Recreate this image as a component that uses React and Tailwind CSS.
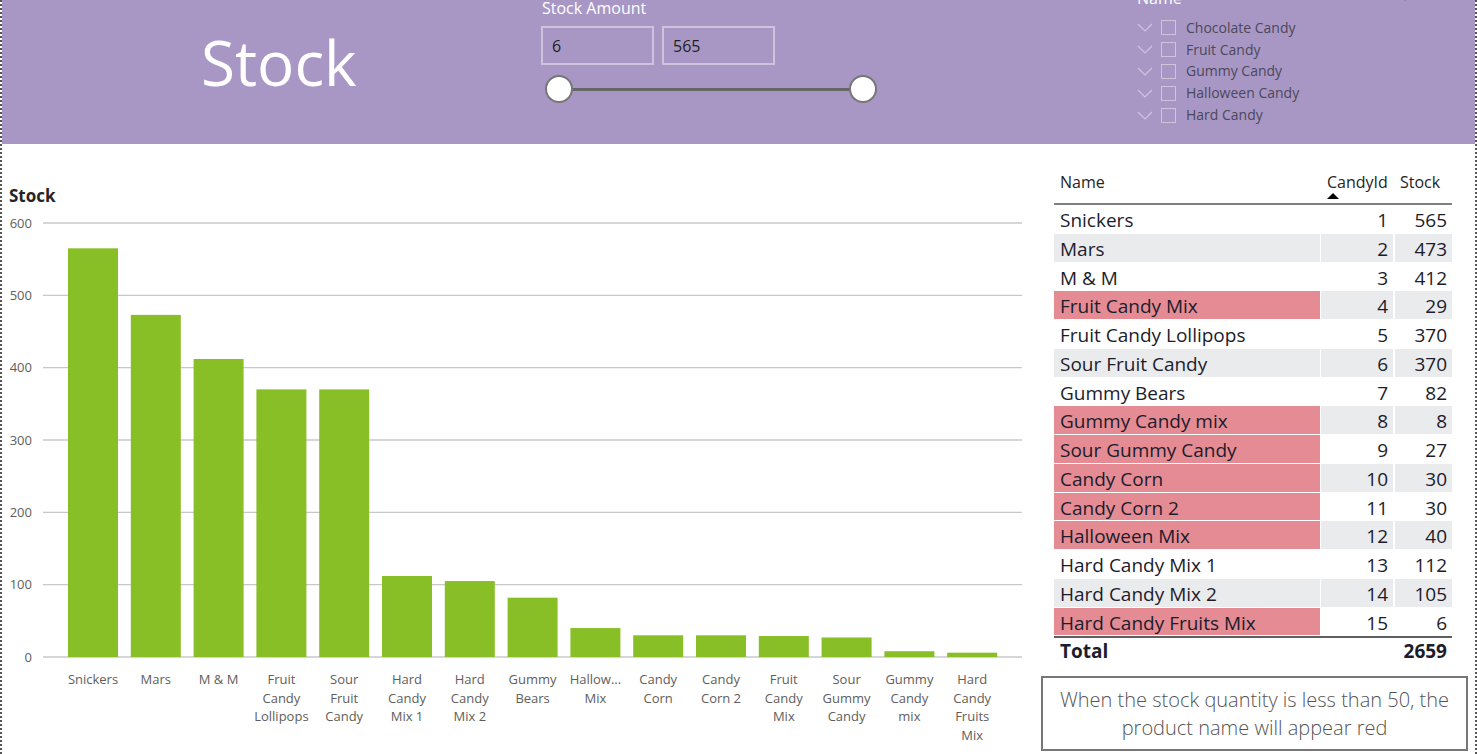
import React from 'react';

const candies = [
  { id: 1, name: 'Snickers', stock: 565, label: ['Snickers'] },
  { id: 2, name: 'Mars', stock: 473, label: ['Mars'] },
  { id: 3, name: 'M & M', stock: 412, label: ['M & M'] },
  { id: 4, name: 'Fruit Candy Mix', stock: 29, label: ['Fruit', 'Candy', 'Mix'] },
  { id: 5, name: 'Fruit Candy Lollipops', stock: 370, label: ['Fruit', 'Candy', 'Lollipops'] },
  { id: 6, name: 'Sour Fruit Candy', stock: 370, label: ['Sour', 'Fruit', 'Candy'] },
  { id: 7, name: 'Gummy Bears', stock: 82, label: ['Gummy', 'Bears'] },
  { id: 8, name: 'Gummy Candy mix', stock: 8, label: ['Gummy', 'Candy', 'mix'] },
  { id: 9, name: 'Sour Gummy Candy', stock: 27, label: ['Sour', 'Gummy', 'Candy'] },
  { id: 10, name: 'Candy Corn', stock: 30, label: ['Candy', 'Corn'] },
  { id: 11, name: 'Candy Corn 2', stock: 30, label: ['Candy', 'Corn 2'] },
  { id: 12, name: 'Halloween Mix', stock: 40, label: ['Hallow...', 'Mix'] },
  { id: 13, name: 'Hard Candy Mix 1', stock: 112, label: ['Hard', 'Candy', 'Mix 1'] },
  { id: 14, name: 'Hard Candy Mix 2', stock: 105, label: ['Hard', 'Candy', 'Mix 2'] },
  { id: 15, name: 'Hard Candy Fruits Mix', stock: 6, label: ['Hard', 'Candy', 'Fruits', 'Mix'] },
];

const categories = ['Chocolate Candy', 'Fruit Candy', 'Gummy Candy', 'Halloween Candy', 'Hard Candy'];

function Chevron({ className }) {
  return (
    <svg width="16" height="9" viewBox="0 0 16 9" className={className}>
      <path d="M1 1 L8 8 L15 1" fill="none" stroke="currentColor" strokeWidth="1.2" />
    </svg>
  );
}

function StockChart() {
  // svg sits at page x 2, y 207
  const sorted = [...candies].sort((a, b) => b.stock - a.stock);
  const zeroY = 657 - 207;
  const scale = 0.7233;
  const ticks = [0, 100, 200, 300, 400, 500, 600];
  return (
    <svg width="1037" height="547" className="block">
      {ticks.map((t) => {
        const y = zeroY - t * scale;
        return (
          <g key={t}>
            <line x1="41" x2="1020" y1={y} y2={y} stroke="#c8c8c8" strokeWidth="1.3" />
            <text x="30" y={y + 4.5} textAnchor="end" fontSize="13" fill="#605e5c">
              {t}
            </text>
          </g>
        );
      })}
      {sorted.map((c, i) => {
        const x = 66 + i * 62.8;
        const h = c.stock * scale;
        return (
          <g key={c.id}>
            <rect x={x} y={zeroY - h} width="50" height={h} fill="#88bf26" />
            {c.label.map((line, j) => (
              <text key={j} x={x + 25} y={zeroY + 27 + j * 18.5} textAnchor="middle" fontSize="13" fill="#605e5c">
                {line}
              </text>
            ))}
          </g>
        );
      })}
    </svg>
  );
}

function StockTable() {
  const total = candies.reduce((s, c) => s + c.stock, 0);
  return (
    <div className="ml-[13px] w-[398px] pt-[23px] text-[#1c1c2c]">
      <div className="relative flex h-[38px] border-b-2 border-[#7f7f7f] text-[16px] leading-[20px] text-[#252423]">
        <div className="w-[266px] pl-[6px] pt-[5px]">Name</div>
        <div className="ml-px w-[72px] pl-[6px] pt-[5px]">CandyId</div>
        <div className="ml-[2px] w-[57px] pl-[5px] pt-[5px]">Stock</div>
        <div className="absolute left-[273px] top-[26px] h-0 w-0 border-x-[6px] border-b-[6px] border-x-transparent border-b-black" />
      </div>
      {candies.map((c, i) => {
        const bg = i % 2 === 1 ? 'bg-[#eaebed]' : 'bg-white';
        const nameBg = c.stock < 50 ? 'bg-[#e58b93]' : bg;
        return (
          <div key={c.id} className="flex h-[28.75px] border-b border-white text-[19px] leading-[28px]">
            <div className={`w-[266px] pl-[6px] pt-px ${nameBg}`}>{c.name}</div>
            <div className={`ml-px w-[72px] pr-[5px] pt-px text-right ${bg}`}>{c.id}</div>
            <div className={`ml-[2px] w-[57px] pr-[5px] pt-px text-right ${bg}`}>{c.stock}</div>
          </div>
        );
      })}
      <div className="flex h-[28px] border-t-2 border-[#5f5f5f] text-[19px] font-bold leading-[26px]">
        <div className="w-[266px] pl-[6px]">Total</div>
        <div className="ml-px w-[72px]" />
        <div className="ml-[2px] w-[57px] pr-[5px] text-right">{total}</div>
      </div>
    </div>
  );
}

export default function App() {
  return (
    <div className="h-[754px] w-[1477px] overflow-hidden border-x-2 border-dotted border-[#555] bg-white font-['Open_Sans',sans-serif]">
      <div className="flex h-[144px] bg-[#a897c5]">
        <div className="w-[539px] shrink-0 pl-[199px] pt-[22px]">
          <div className="text-[62px] leading-[80px] text-white">Stock</div>
        </div>
        <div className="w-[596px] shrink-0">
          <div className="pl-px text-[16px] leading-[17px] text-white">Stock Amount</div>
          <div className="mt-[9px] flex gap-[8px]">
            <div className="flex h-[39px] w-[113px] items-center border-2 border-[#cdc3dd] pl-[9px] text-[16px] text-[#1f1f1f]">6</div>
            <div className="flex h-[39px] w-[113px] items-center border-2 border-[#cdc3dd] pl-[9px] text-[16px] text-[#1f1f1f]">565</div>
          </div>
          <div className="relative ml-[18px] mt-[23px] h-[3px] w-[304px] bg-[#666]">
            <div className="absolute -left-[14px] -top-[13px] h-[28px] w-[28px] rounded-full border-2 border-[#777] bg-white" />
            <div className="absolute -right-[14px] -top-[13px] h-[28px] w-[28px] rounded-full border-2 border-[#777] bg-white" />
          </div>
        </div>
        <div className="flex-1">
          <div className="relative -mt-[12px] flex h-[20px] items-end text-[16px] leading-[20px] text-white">
            <span>Name</span>
            <Chevron className="absolute left-[260px] top-[4px] text-[#6f6a7c]" />
          </div>
          <div className="mt-[9px]">
            {categories.map((c) => (
              <div key={c} className="flex h-[21.8px] items-center">
                <Chevron className="text-[#cec4de]" />
                <div className="ml-[8px] h-[15px] w-[15px] border border-[#cec6d8]" />
                <div className="ml-[10px] text-[14px] leading-[18px] text-[#4c4859]">{c}</div>
              </div>
            ))}
          </div>
        </div>
      </div>
      <div className="flex">
        <div className="w-[1039px] shrink-0">
          <div className="pl-[7px] pt-[41px] text-[17px] font-bold leading-[22px] text-[#252423]">Stock</div>
          <StockChart />
        </div>
        <div className="flex-1">
          <StockTable />
          <div className="mt-[12px] flex h-[75px] w-[427px] flex-col items-center justify-center border-2 border-[#777] text-center text-[20px] font-light leading-[28px] text-[#555]">
            <div>When the stock quantity is less than 50, the</div>
            <div>product name will appear red</div>
          </div>
        </div>
      </div>
    </div>
  );
}
